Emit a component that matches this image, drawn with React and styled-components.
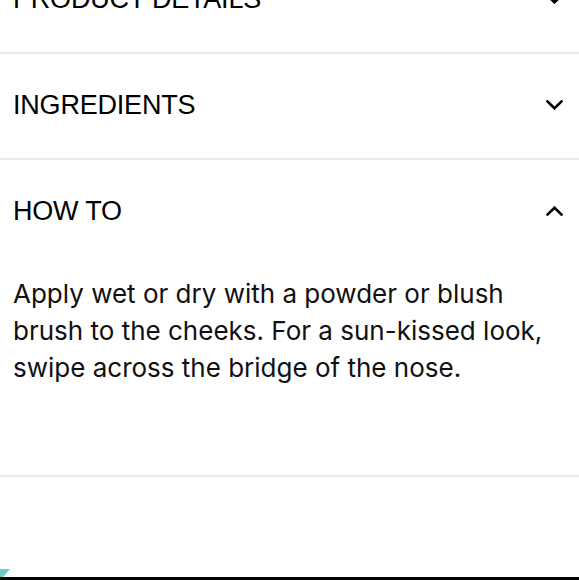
import React, { useState } from 'react';
import styled, { createGlobalStyle } from 'styled-components';

const Global = createGlobalStyle`
  html, body {
    margin: 0;
    padding: 0;
    background: #fff;
    overflow: hidden;
  }
  body {
    font-family: "Liberation Sans", Arial, sans-serif;
    color: #111;
  }
`;

const Page = styled.div`
  width: 579px;
  height: 580px;
  display: flex;
  flex-direction: column;
  overflow: hidden;
`;

const List = styled.div`
  margin-top: -52px;
  display: flex;
  flex-direction: column;
`;

const Section = styled.div`
  border-bottom: 2px solid #e8e9ec;
`;

const Header = styled.button`
  all: unset;
  box-sizing: border-box;
  width: 100%;
  height: 104px;
  padding: 0 16px 2px 13px;
  display: flex;
  align-items: center;
  justify-content: space-between;
  cursor: pointer;
`;

const Title = styled.span`
  font-family: "Liberation Sans", Arial, sans-serif;
  font-size: 27px;
  letter-spacing: -0.2px;
  color: #000;
  text-transform: uppercase;
`;

const Body = styled.p`
  margin: 0;
  padding: 11px 14px 89px 13px;
  font-family: Inter, "Liberation Sans", sans-serif;
  font-size: 26px;
  letter-spacing: 0;
  line-height: 37px;
  color: #111;
`;

const Chevron = styled.svg`
  width: 17px;
  height: 10px;
  transform: ${(p) => (p.$open ? 'rotate(180deg)' : 'none')};
`;

const Bottom = styled.div`
  flex: 1;
  display: flex;
  flex-direction: column;
  justify-content: flex-end;
`;

const Tab = styled.div`
  width: 10px;
  height: 8px;
  background: #68cfc0;
  clip-path: polygon(0 0, 100% 0, 30% 100%, 0 100%);
`;

const Bar = styled.div`
  height: 3px;
  background: #000;
`;

const sections = [
  { title: 'Product Details', text: '' },
  { title: 'Ingredients', text: '' },
  {
    title: 'How to',
    text: 'Apply wet or dry with a powder or blush brush to the cheeks. For a sun-kissed look, swipe across the bridge of the nose.',
  },
];

function Item({ title, text, open, onToggle }) {
  return (
    <Section>
      <Header onClick={onToggle}>
        <Title>{title}</Title>
        <Chevron $open={open} viewBox="0 0 17 10" fill="none">
          <polyline points="1.5,1.5 8.5,8.3 15.5,1.5" stroke="#000" strokeWidth="2.6" strokeLinecap="square" />
        </Chevron>
      </Header>
      {open && <Body>{text}</Body>}
    </Section>
  );
}

export default function App() {
  const [openIdx, setOpenIdx] = useState(2);
  return (
    <Page>
      <Global />
      <List>
        {sections.map((s, i) => (
          <Item
            key={s.title}
            title={s.title}
            text={s.text}
            open={openIdx === i}
            onToggle={() => setOpenIdx(openIdx === i ? -1 : i)}
          />
        ))}
      </List>
      <Bottom>
        <Tab />
        <Bar />
      </Bottom>
    </Page>
  );
}
